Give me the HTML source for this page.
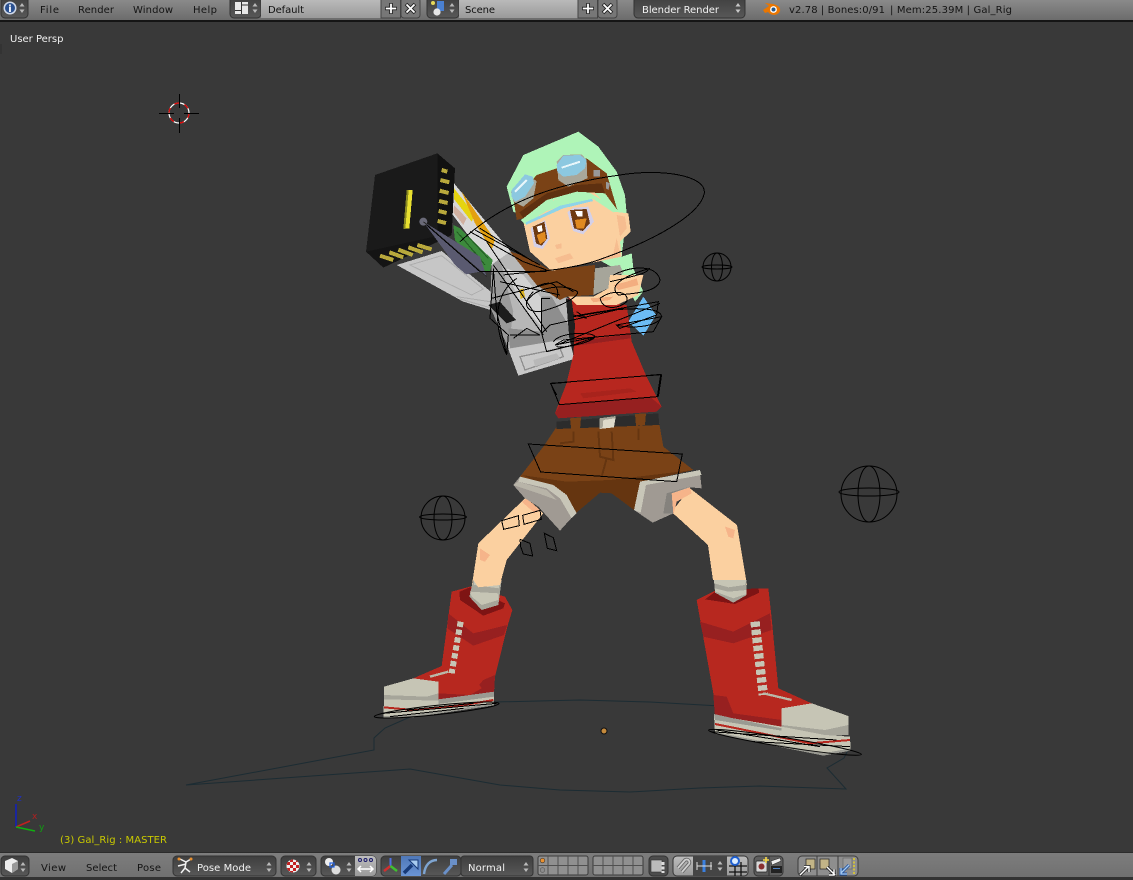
<!DOCTYPE html>
<html><head><meta charset="utf-8"><style>
html,body{margin:0;padding:0;background:#393939;overflow:hidden}
svg{display:block}
text{font-family:"DejaVu Sans","Liberation Sans",sans-serif;font-size:10px}
.m polygon,.m path{shape-rendering:crispEdges}
.w{fill:none;stroke:#000;stroke-width:3}
</style></head><body>
<svg width="1133" height="880" viewBox="0 0 1133 880" xmlns="http://www.w3.org/2000/svg">
<defs>
<linearGradient id="hd" x1="0" y1="0" x2="0" y2="1"><stop offset="0" stop-color="#8a8a8a"/><stop offset="1" stop-color="#6c6c6c"/></linearGradient>
<linearGradient id="hb" x1="0" y1="0" x2="0" y2="1"><stop offset="0" stop-color="#7d7d7d"/><stop offset="1" stop-color="#6f6f6f"/></linearGradient>
<linearGradient id="dk" x1="0" y1="0" x2="0" y2="1"><stop offset="0" stop-color="#3e3e3e"/><stop offset="1" stop-color="#585858"/></linearGradient>
<linearGradient id="lt" x1="0" y1="0" x2="0" y2="1"><stop offset="0" stop-color="#bdbdbd"/><stop offset="1" stop-color="#9a9a9a"/></linearGradient>
<linearGradient id="bl" x1="0" y1="0" x2="0" y2="1"><stop offset="0" stop-color="#4f78b8"/><stop offset="1" stop-color="#6a94d4"/></linearGradient>
<clipPath id="pv"><circle cx="293" cy="866" r="6.500"/></clipPath>
<g id="ud"><path d="M-2.5,-1.5L0,-5L2.5,-1.5Z M-2.5,1.5L0,5L2.5,1.5Z"/></g>
</defs>
<rect width="1133" height="880" fill="#393939"/>

<!-- ground outline -->
<path d="M186,785 L374,750 L374,738 L385,728 L410,717 L495,702 L580,700 L650,702 L720,706 L780,710 L800,725 L848,750 L844,758 L827,768 L846,789 L760,786 L700,788 L630,792 L560,790 L500,785 L410,769 Z" fill="none" stroke="#1c2c33" stroke-width="1"/>
<circle cx="604" cy="731" r="3" fill="#c58a3c" stroke="#111" stroke-width="1"/>

<!-- MODEL upper (zoom5 coordinates) -->
<g class="m" transform="translate(360 125) scale(.33333)">
<!-- mint hair -->
<path fill="#aff4b8" d="M440,185 L490,90 L655,20 L715,65 L770,140 L795,210 L800,265 L785,395 L815,385 L820,430 L850,500 L825,530 L780,440 L460,260Z"/>
<!-- blue sleeve -->
<path fill="#6cbcf5" d="M850,515 L888,570 L850,632 L805,590 Z"/>
<!-- gun panels -->
<path fill="#d8d8d8" d="M282,175 L465,395 L395,425 L275,265Z"/>
<path fill="#e5d410" d="M282,190 L345,270 L335,290 L282,222Z"/>
<path fill="#e3a010" d="M305,200 L405,345 L395,375 L345,295Z"/>
<path fill="#d0b0a0" d="M282,240 L320,280 L310,300 L280,262Z"/>
<path fill="#3c8a3c" d="M280,300 L300,310 L398,405 L390,440 L362,440 L285,345Z"/>
<path fill="none" stroke="#235a23" stroke-width="3" d="M290,320 L360,400 M300,330 L375,420 M320,330 L385,400"/>
<!-- gun underside -->
<path fill="#c6c6c6" d="M110,420 L245,378 L392,500 L392,555 L310,530 Z"/>
<path fill="none" stroke="#aeaeae" stroke-width="3" d="M150,420 L245,392 L370,492 L335,510 Z M290,515 L390,530 M300,522 L390,548"/>
<!-- gun body -->
<path fill="#b7b7b7" d="M395,420 L450,380 L600,510 L625,520 L640,700 L475,752 L445,670 L390,545Z"/>
<path fill="#9a9a9a" d="M395,420 L420,400 L460,560 L445,670 L390,545Z"/>
<path fill="#d2d2d2" d="M440,430 L490,450 L545,520 L550,610 L480,540Z"/>
<path fill="#8e8e8e" d="M545,515 L575,515 L625,600 L630,640 L450,670 L445,610 L545,620Z"/>
<path fill="#c8c8c8" d="M445,672 L630,640 L642,702 L475,752Z"/>
<path fill="none" stroke="#8e8e8e" stroke-width="4" d="M480,695 L600,670 L610,695 L495,735Z"/>
<path fill="#b8b8b8" d="M520,705 L590,685 L600,700 L525,725Z"/>
<path fill="#1c1c1c" d="M385,540 L420,530 L468,585 L440,595Z"/>
<path fill="#d8b020" d="M478,495 L490,490 L495,515 L482,522Z"/>
<!-- black box -->
<path fill="#1a1a1a" d="M45,150 L232,85 L232,345 L18,380Z"/>
<path fill="#111" d="M232,85 L285,130 L275,330 L232,345Z"/>
<path fill="#141414" d="M18,380 L245,330 L272,332 L70,428Z"/>
<path fill="#e8e030" d="M140,195 L158,195 L148,310 L130,312Z"/>
<path fill="#8a8a20" d="M140,195 L146,195 L136,312 L130,312Z"/>
<path fill="none" stroke="#b8a83c" stroke-width="12" d="M245,135 L262,140 M241,165 L268,172 M239,197 L266,204 M237,228 L263,234 M236,258 L260,264 M233,288 L258,294 M60,392 L100,405 M88,382 L130,397 M115,374 L158,390 M145,367 L188,382 M172,360 L215,373"/>
<!-- bone -->
<path fill="#5a5a70" d="M190,290 L360,395 L380,455 L360,440 L318,448 L285,420Z"/>
<circle cx="190" cy="290" r="12" fill="#6a6a78"/>
<path fill="none" stroke="#2c2c2c" stroke-width="3" d="M190,290 L380,455"/>
<!-- red dress -->
<path fill="#b7271f" d="M620,520 L800,540 L815,650 L885,815 L610,815 L640,690 L640,600Z"/>
<path fill="#962020" d="M650,650 L770,632 L810,628 L812,640 L650,662Z"/>
<path fill="#1f1f1f" d="M618,520 L635,525 L645,600 L640,690 L628,640Z"/>
<!-- neck strip -->
<path fill="#a6a59a" d="M705,430 L780,420 L790,445 L750,455 L745,490 L700,510Z"/>
<!-- hand -->
<path fill="#fbd0a0" d="M750,450 L850,450 L835,510 L770,540 L650,540 L625,515 L700,515 L745,490Z"/>
<path fill="#f3ae80" d="M760,480 L800,470 L830,460 L835,480 L775,495Z M690,520 L760,515 L750,525 L700,532Z"/>
<!-- brown hair -->
<path fill="#7a4216" d="M450,380 L500,395 L570,435 L705,420 L700,510 L620,515 L600,525 L530,480 Z"/>
<!-- face -->
<path fill="#fbd0a0" d="M490,290 L580,225 L700,200 L760,260 L805,265 L812,320 L780,350 L785,395 L575,438 L510,380Z"/>
<path fill="#f6bd90" d="M770,270 L795,275 L800,310 L780,335Z M770,340 L782,395 L700,412 L760,385Z M585,400 L630,385 L640,400 L595,415Z M585,360 L605,355 L605,370 L590,372Z"/>
<!-- fringe -->
<path fill="#aff4b8" d="M482,285 L560,232 L680,198 L775,255 L760,262 L700,222 L620,238 L560,258 L495,298Z"/>
<path fill="#8fd4e8" d="M497,292 L555,265 L600,242 L695,222 L700,228 L610,250 L560,272 L498,300Z"/>
<!-- goggle band -->
<path fill="#7a4216" d="M462,230 L530,150 L680,100 L740,145 L772,255 L735,205 L650,200 L560,225 L490,280 L470,285Z"/>
<path fill="#5e3010" d="M478,262 L560,205 L650,180 L725,175 L735,205 L650,200 L560,225 L490,280Z"/>
<!-- goggles -->
<path fill="#a9a79a" d="M590,110 L610,90 L665,88 L680,105 L682,160 L625,185 L595,165Z"/>
<path fill="#8cc8e0" d="M590,120 L610,92 L660,90 L680,105 L675,130 L650,150 L610,155 L592,140Z"/>
<path fill="none" stroke="#e8f6fa" stroke-width="6" d="M605,128 L660,110"/>
<path fill="#a9a79a" d="M453,200 L495,148 L530,168 L520,220 L490,245 L460,230Z"/>
<path fill="#8cc8e0" d="M455,195 L495,148 L518,155 L522,175 L495,215 L465,230 L455,215Z"/>
<path fill="none" stroke="#e8f6fa" stroke-width="6" d="M465,200 L500,165"/>
<path fill="#999" d="M700,135 L720,135 L720,155 L700,155Z M738,170 L750,175 L745,195 L738,190Z"/>
<!-- eyes -->
<path fill="#d4d0e8" d="M622,262 L640,248 L685,245 L702,290 L670,328 L640,318Z"/>
<path fill="#6e3a12" d="M630,255 L680,252 L690,295 L668,318 L642,310Z"/>
<path fill="#e08a20" d="M645,285 L680,280 L672,310 L650,310Z"/>
<path fill="#fff" d="M645,258 L668,258 L668,274 L652,274Z"/>
<path fill="#d4d0e8" d="M512,310 L555,285 L570,340 L548,372 L522,365Z"/>
<path fill="#6e3a12" d="M518,305 L553,290 L562,340 L545,362 L528,355Z"/>
<path fill="#e08a20" d="M530,330 L555,320 L558,345 L540,358Z"/>
<path fill="#fff" d="M530,305 L545,300 L548,318 L535,322Z"/>
<!-- wires -->
<g class="w" style="shape-rendering:auto">
<path d="M300,350 C420,240 560,180 780,150 C900,130 1040,150 1033,205 C1020,270 880,350 700,410 C600,440 500,440 430,450"/>
<path d="M905,748 L572,776 L590,810 M905,748 L895,815"/>
<path d="M200,300 L360,440 L560,440 M330,320 L490,410 L560,435 M360,310 L520,410 M345,315 L540,420 M380,350 L560,620 M400,420 L550,630 M395,520 L590,470 L640,500 M400,430 L410,560 L440,690 L445,630 L390,580 L400,440"/>
<path d="M760,450 C820,420 890,420 900,465 C895,500 830,505 775,510 C740,480 800,450 870,430 M500,530 C530,480 620,480 640,495 C680,500 620,540 540,560 C490,560 490,530 520,500 M720,520 C760,490 810,500 800,530 C780,550 730,560 720,520 M750,470 C820,455 880,440 860,430"/>
<path d="M570,520 L545,520 L545,625 L560,680 L640,660 L710,635 L585,660 L610,645 L880,620 L905,575 L770,600 L780,610 L890,570 L895,530 L640,575 L790,550 L660,580 L570,600 L545,625"/>
<path d="M520,490 C590,450 600,500 590,520 M470,460 C400,510 400,600 440,690 M420,470 L600,510"/>
<path d="M580,650 C600,620 700,620 705,635 C700,650 620,670 590,665 M640,575 C700,560 900,530 905,575 C890,610 800,610 770,600 M590,660 L900,535 M450,630 L540,630 L500,610 L460,640 M640,570 L680,580 L650,560"/>
</g>
</g>

<!-- MODEL middle (zoom6 coordinates) -->
<g class="m" transform="translate(410 370) scale(.33333)">
<!-- left leg -->
<path fill="#fbd0a0" d="M345,385 L400,430 L290,570 L268,650 L185,650 L205,520Z"/>
<path fill="#f6b48a" d="M335,395 L350,385 L390,420 L375,430Z M210,535 L240,555 L225,575 L210,570Z"/>
<!-- right leg -->
<path fill="#fbd0a0" d="M785,426 L840,355 L981,465 L1011,645 L909,630 L894,525Z"/>
<path fill="#f6b48a" d="M785,370 L840,352 L845,370 L800,395 L790,435Z M945,470 L975,480 L970,505 L955,500Z"/>
<!-- dress lower -->
<path fill="#b7271f" d="M485,0 L700,0 L755,110 L740,125 L445,145 L435,130Z"/>
<path fill="#962020" d="M450,103 L720,80 L755,110 L740,125 L445,145 L435,130Z"/>
<path fill="#a8231c" d="M510,70 L660,55 L680,65 L520,85Z"/>
<!-- shorts -->
<path fill="#7a4216" d="M440,170 L745,145 L760,230 L850,300 L700,335 L672,420 L605,370 L570,368 L497,430 L465,370 L330,320 L400,230Z"/>
<path fill="#653510" d="M335,315 L470,335 L600,330 L850,300 L700,335 L672,420 L605,370 L570,368 L497,430 L465,370Z"/>
<path fill="none" stroke="#653510" stroke-width="6" d="M565,185 L570,260 L610,270 L605,185 M590,265 L575,320 M490,185 L490,215 L450,220 M685,175 L685,210"/>
<!-- belt -->
<path fill="#2c2c2c" d="M440,155 L745,130 L748,165 L440,177Z"/>
<path fill="#7a4216" d="M480,145 L513,142 L510,180 L484,180Z M675,132 L708,130 L705,165 L678,168Z"/>
<path fill="#dedacb" d="M568,145 L617,140 L612,172 L568,177Z"/>
<path fill="#a9a699" d="M568,145 L617,138 L615,145 L580,150 L578,172 L568,177Z"/>
<!-- left cuff -->
<path fill="#a09a93" d="M310,345 L330,320 L465,370 L497,430 L450,482 L385,410 L345,385Z"/>
<path fill="#c8c6b8" d="M330,320 L430,345 L470,375 L500,430 L485,445 L450,385 L410,355 L325,335Z"/>
<path fill="#b8b4a8" d="M310,345 L325,335 L410,360 L440,390 L385,370Z"/>
<!-- right cuff -->
<path fill="#a09a93" d="M690,335 L870,310 L875,355 L840,352 L785,370 L790,430 L728,458 L672,420Z"/>
<path fill="#c8c6b8" d="M690,335 L870,300 L875,315 L708,345 L692,428 L672,420Z"/>
<path fill="#85827d" d="M770,370 L840,350 L785,370 L790,430 L760,430Z"/>
<!-- wires -->
<g class="w" style="shape-rendering:auto">
<path d="M422,40 L752,14 L742,80 L448,104Z"/>
<path d="M355,222 L817,252 L800,335 L392,306Z"/>
<path d="M275,452 L325,437 L328,467 L281,478Z"/>
<path d="M338,436 L390,421 L394,448 L342,463Z"/>
<path d="M330,508 L360,520 L368,558 L340,552 L332,530 L330,508"/>
<path d="M403,490 L430,503 L440,542 L412,535Z"/>
</g>
</g>

<!-- MODEL boots (zoom7 coordinates) -->
<g class="m" transform="translate(370 580) scale(.33333)">
<!-- left boot -->
<path fill="#b7281f" d="M245,35 L300,20 L405,50 L427,90 L412,140 L375,290 L372,340 L205,360 L130,295 L215,258Z"/>
<path fill="#7e1414" d="M268,35 L300,22 L405,70 L400,85 L340,107 L270,60Z"/>
<path fill="#972020" d="M235,100 L310,160 L412,135 L402,165 L310,197 L232,145Z"/>
<path fill="#972020" d="M205,340 L300,345 L340,300 L375,285 L372,338 L205,360Z"/>
<path fill="#b7281f" d="M215,330 L300,335 L325,310 L335,325 L300,345 L215,340Z"/>
<path fill="#a6a59a" d="M310,0 L395,0 L385,75 L335,90 L298,50Z"/>
<path fill="#c6c5b5" d="M312,0 L392,0 L386,25 L312,15Z M300,35 L385,40 L385,60 L335,75 L305,50Z"/>
<path fill="#fbd0a0" d="M310,0 L395,0 L390,15 L325,22Z" />
<path fill="none" stroke="#c6c5b5" stroke-width="18" stroke-dasharray="16 8" d="M272,125 L245,280"/>
<path fill="none" stroke="#b9b8a8" stroke-width="7" d="M180,290 L235,275"/>
<path fill="#c6c5b5" d="M42,320 L130,295 L205,305 L205,360 L42,350 Z"/>
<path fill="#a6a59a" d="M42,345 L170,350 L205,340 L205,362 L42,358Z"/>
<path fill="#c6c5b5" d="M42,358 L205,362 L372,338 L372,375 L130,410 L40,415Z"/>
<path fill="#9a9a92" d="M205,358 L372,335 L372,350 L205,372Z"/>
<path fill="none" stroke="#b7281f" stroke-width="6" d="M42,382 L130,390 L300,372 L370,360"/>
<path fill="#9a9a92" d="M40,408 L130,405 L372,370 L372,376 L130,412 L40,416Z"/>
<!-- right boot -->
<path fill="#b7281f" d="M980,60 L1040,30 L1195,25 L1205,115 L1225,325 L1325,370 L1235,385 L1235,445 L1035,410 L1030,340Z"/>
<path fill="#7e1414" d="M1005,58 L1040,32 L1165,25 L1168,38 L1095,72Z"/>
<path fill="#972020" d="M990,125 L1090,155 L1200,100 L1205,150 L1090,190 L1000,170Z"/>
<path fill="#a6a59a" d="M1032,0 L1130,0 L1130,45 L1090,68 L1035,38Z"/>
<path fill="#c6c5b5" d="M1032,0 L1130,0 L1125,15 L1075,22 L1032,10Z M1035,25 L1075,35 L1130,30 L1130,42 L1090,55 L1036,35Z"/>
<path fill="none" stroke="#c6c5b5" stroke-width="28" stroke-dasharray="16 8" d="M1155,125 L1180,345"/>
<path fill="none" stroke="#b9b8a8" stroke-width="7" d="M1180,340 L1265,360"/>
<path fill="#972020" d="M1030,345 L1070,350 L1090,400 L1235,420 L1235,445 L1035,410Z"/>
<path fill="#c6c5b5" d="M1235,385 L1325,370 L1435,408 L1435,460 L1365,465 L1235,440Z"/>
<path fill="#a6a59a" d="M1235,435 L1365,450 L1435,435 L1435,465 L1360,468 L1235,445Z"/>
<path fill="#c6c5b5" d="M1032,405 L1235,440 L1365,465 L1440,470 L1442,510 L1360,525 L1035,460Z"/>
<path fill="#9a9a92" d="M1032,402 L1090,415 L1235,445 L1235,452 L1035,420Z"/>
<path fill="none" stroke="#b7281f" stroke-width="6" d="M1035,432 L1100,445 L1320,490 L1440,480"/>
<path fill="#9a9a92" d="M1035,456 L1360,520 L1442,505 L1442,512 L1360,527 L1035,462Z"/>
<!-- feet wires -->
<g class="w" style="shape-rendering:auto">
<ellipse cx="200" cy="390" rx="188" ry="14" transform="rotate(-6 200 390)"/>
<path d="M40,400 L380,370 M110,390 L310,370 M60,410 L280,385"/>
<ellipse cx="1245" cy="487" rx="232" ry="14" transform="rotate(9 1245 487)"/>
<path d="M1020,455 L1400,480 M1040,450 L1350,500 M1150,485 L1440,500"/>
</g>
</g>

<!-- bone spheres -->
<g fill="none" stroke="#000" stroke-width="1">
<circle cx="443" cy="518" r="22"/><ellipse cx="443" cy="518" rx="9" ry="22"/><ellipse cx="443" cy="517" rx="23.5" ry="3"/>
<circle cx="869" cy="494" r="28"/><ellipse cx="869" cy="494" rx="11" ry="28"/><ellipse cx="869" cy="492" rx="30" ry="4"/>
<circle cx="717" cy="267" r="14"/><ellipse cx="717" cy="267" rx="5.5" ry="14"/><ellipse cx="717" cy="267" rx="15" ry="2"/>
</g>

<!-- 3D cursor -->
<circle cx="179" cy="113" r="10" fill="none" stroke="#fff" stroke-width="1.2"/>
<circle cx="179" cy="113" r="10" fill="none" stroke="#e00000" stroke-width="1.3" stroke-dasharray="5 5.5"/>
<path d="M159,113.5H174M184,113.5H199M179.5,94V108M179.5,118V133" stroke="#000" stroke-width="1"/>

<!-- text overlays -->
<text x="10" y="42" fill="#f0f0f0">User Persp</text>
<text x="60" y="843" fill="#c9c900" textLength="107">(3) Gal_Rig : MASTER</text>
<path d="M0,44h2v10h-2z" fill="#333"/>

<!-- axis gizmo -->
<path d="M16,827V804" stroke="#1020c0" stroke-width="1.5"/>
<path d="M16,827L30,821" stroke="#c02020" stroke-width="1.5"/>
<path d="M16,827L35,831" stroke="#10b010" stroke-width="1.5"/>
<text x="17" y="801" fill="#2030c0" style="font-size:9px">z</text>
<text x="32" y="819" fill="#b02020" style="font-size:9px">x</text>
<text x="39" y="830" fill="#10a010" style="font-size:9px">y</text>

<!-- TOP HEADER -->
<rect width="1133" height="20" fill="url(#hd)"/>
<rect y="20" width="1133" height="2" fill="#151515"/>
<rect x="1" y="-4" width="27" height="22" rx="4" fill="url(#dk)" stroke="#333"/>
<circle cx="10" cy="8" r="6.5" fill="#cfd8e8"/><circle cx="10" cy="8" r="5" fill="#2a5090"/>
<text x="8.2" y="12" fill="#fff" style="font-size:10px;font-weight:bold">i</text>
<use href="#ud" x="22" y="8" fill="#b8b8b8"/>
<g fill="#141414">
<text x="40" y="13" textLength="19">File</text>
<text x="78" y="13" textLength="36">Render</text>
<text x="133" y="13" textLength="40">Window</text>
<text x="193" y="13" textLength="24">Help</text>
</g>
<!-- layout selector -->
<rect x="230" y="-4" width="31" height="22" rx="4" fill="url(#dk)" stroke="#333"/>
<rect x="235" y="2" width="13" height="12" fill="#e8e8e8"/><path d="M241.5,2V14M235,10.5H241M242,5H248" stroke="#333" stroke-width="1"/>
<use href="#ud" x="255" y="8" fill="#b8b8b8"/>
<rect x="261" y="-2" width="120" height="20" fill="url(#lt)"/>
<text x="268" y="13" fill="#111" textLength="36">Default</text>
<rect x="381" y="-2" width="19.5" height="20" fill="#777" stroke="#444"/>
<rect x="401" y="-2" width="19" height="20" rx="3" fill="#777" stroke="#444"/>
<path d="M391,3V14M385,8.500H397" stroke="#222" stroke-width="3.600"/><path d="M391,3.800V13.200M385.800,8.500H396.200" stroke="#fff" stroke-width="1.800"/>
<path d="M406,4L415,13M415,4L406,13" stroke="#222" stroke-width="3.600"/><path d="M406.500,4.500L414.500,12.500M414.500,4.500L406.500,12.500" stroke="#fff" stroke-width="1.800"/>
<!-- scene -->
<rect x="427" y="-4" width="32" height="22" rx="4" fill="url(#dk)" stroke="#333"/>
<rect x="437" y="1" width="7" height="10" fill="#4a80d0"/><circle cx="433" cy="3" r="2" fill="#e6d85a"/><circle cx="437" cy="12" r="3.6" fill="#e6e6e6"/>
<use href="#ud" x="452" y="8" fill="#b8b8b8"/>
<rect x="459" y="-2" width="119" height="20" fill="url(#lt)"/>
<text x="465" y="13" fill="#111" textLength="30">Scene</text>
<rect x="578" y="-2" width="19.5" height="20" fill="#777" stroke="#444"/>
<rect x="598" y="-2" width="19" height="20" rx="3" fill="#777" stroke="#444"/>
<path d="M588,3V14M582,8.500H594" stroke="#222" stroke-width="3.600"/><path d="M588,3.800V13.200M582.800,8.500H593.200" stroke="#fff" stroke-width="1.800"/>
<path d="M603,4L612,13M612,4L603,13" stroke="#222" stroke-width="3.600"/><path d="M603.500,4.500L611.500,12.500M611.500,4.500L603.500,12.500" stroke="#fff" stroke-width="1.800"/>
<!-- engine -->
<rect x="634" y="-4" width="111" height="22" rx="4" fill="url(#dk)" stroke="#333"/>
<text x="642" y="13" fill="#f2f2f2" textLength="77">Blender Render</text>
<use href="#ud" x="738" y="8" fill="#c8c8c8"/>
<!-- logo -->
<path d="M763,10L769,6L765,3L773,4C778,5 781,8 780,11C778,16 771,16 768,12L765,13Z" fill="#ea7600"/>
<circle cx="773.500" cy="9.500" r="3.400" fill="#fff"/><circle cx="773.500" cy="9.500" r="2" fill="#265787"/>
<text x="789" y="13" fill="#141414" textLength="96">v2.78 | Bones:0/91</text>
<text x="890" y="13" fill="#141414" textLength="122">| Mem:25.39M | Gal_Rig</text>

<!-- BOTTOM HEADER -->
<rect y="852" width="1133" height="1" fill="#2c2c2c"/>
<rect y="853" width="1133" height="27" fill="url(#hb)"/>
<rect y="877" width="1133" height="3" fill="#333"/>
<rect x="1" y="856" width="28" height="20" rx="4" fill="url(#dk)" stroke="#333"/>
<path d="M5,861L12,858L18,861V869L12,873L5,869Z" fill="#eee"/><path d="M12,864L18,861V869L12,873Z" fill="#999"/>
<use href="#ud" x="23" y="867" fill="#b8b8b8"/>
<g fill="#141414">
<text x="41" y="871" textLength="25">View</text>
<text x="86" y="871" textLength="31">Select</text>
<text x="137" y="871" textLength="24">Pose</text>
</g>
<rect x="173" y="856" width="103" height="20" rx="4" fill="url(#dk)" stroke="#333"/>
<path d="M180,859L186,862L191,859M186,862L185,868L181,873M185,868L190,872M186,864L178,866" fill="none" stroke="#f2f2f2" stroke-width="1.500"/>
<circle cx="179" cy="859" r="1.500" fill="#e89030"/><circle cx="191" cy="859" r="1.500" fill="#e89030"/>
<text x="197" y="871" fill="#f2f2f2" textLength="54">Pose Mode</text>
<use href="#ud" x="269" y="867" fill="#bbb"/>
<rect x="281" y="856" width="35" height="20" rx="4" fill="url(#dk)" stroke="#333"/>
<circle cx="293" cy="866" r="6.500" fill="#eee"/>
<g clip-path="url(#pv)" fill="#c42020"><rect x="290" y="859" width="3" height="3"/><rect x="296" y="859" width="3" height="3"/><rect x="287" y="862" width="3" height="3"/><rect x="293" y="862" width="3" height="3"/><rect x="290" y="865" width="3" height="3"/><rect x="296" y="865" width="3" height="3"/><rect x="287" y="868" width="3" height="3"/><rect x="293" y="868" width="3" height="3"/><rect x="290" y="871" width="3" height="3"/></g>
<use href="#ud" x="309" y="867" fill="#bbb"/>
<rect x="321" y="856" width="55" height="20" rx="4" fill="url(#dk)" stroke="#333"/>
<path d="M355,856h17a4,4 0 0 1 4,4v12a4,4 0 0 1-4,4h-17z" fill="url(#lt)"/>
<circle cx="329" cy="862" r="4" fill="#eee"/><circle cx="336" cy="870" r="4.500" fill="#ddd"/><rect x="330" y="863" width="4" height="4" fill="none" stroke="#2060e0" stroke-width="1.200"/>
<use href="#ud" x="349" y="867" fill="#bbb"/>
<circle cx="360" cy="860" r="1.500" fill="none" stroke="#1a1a6a"/><circle cx="365.500" cy="860" r="1.500" fill="none" stroke="#1a1a6a"/><circle cx="371" cy="860" r="1.500" fill="none" stroke="#1a1a6a"/>
<path d="M358,869H373M361,866L358,869L361,872M370,866L373,869L370,872" fill="none" stroke="#fff" stroke-width="1.500"/>
<rect x="381" y="856" width="80" height="20" rx="4" fill="url(#dk)" stroke="#333"/>
<rect x="401" y="856" width="20" height="20" fill="url(#bl)"/>
<path d="M390.500,866V858" stroke="#5070e0" stroke-width="2"/><path d="M390.500,866L384,871" stroke="#d03030" stroke-width="2.400"/><path d="M390.500,866L397,871" stroke="#40c030" stroke-width="2.400"/>
<path d="M404,873L412,865" stroke="#173a78" stroke-width="3.500"/><path d="M409,860H418V869Z" fill="#a8ccf0" stroke="#173a78"/>
<path d="M424,874C425,865 430,860 437,860" fill="none" stroke="#7ea4d0" stroke-width="2.400"/>
<path d="M444,874L452,865" stroke="#6a90c8" stroke-width="3"/><rect x="450" y="859" width="7" height="6" fill="#6a90c8"/>
<rect x="461" y="856" width="72" height="20" rx="3" fill="url(#dk)" stroke="#333"/>
<text x="468" y="871" fill="#f2f2f2" textLength="37">Normal</text>
<use href="#ud" x="526" y="867" fill="#bbb"/>
<!-- layers -->
<g>
<rect x="538" y="856" width="50" height="19" rx="2" fill="#909090" stroke="#3a3a3a"/>
<path d="M548,856V875M558,856V875M568,856V875M578,856V875M538,865.500H588" stroke="#505050" stroke-width="1"/>
<circle cx="542.500" cy="860.500" r="2.300" fill="#e89030" stroke="#333" stroke-width=".6"/><circle cx="542.500" cy="870" r="2.300" fill="#8c8c8c" stroke="#555" stroke-width=".6"/>
<rect x="593" y="856" width="50" height="19" rx="2" fill="#909090" stroke="#3a3a3a"/>
<path d="M603,856V875M613,856V875M623,856V875M633,856V875M593,865.500H643" stroke="#505050" stroke-width="1"/>
</g>
<rect x="649" y="856" width="19" height="20" rx="4" fill="#4c4c4c" stroke="#333"/>
<rect x="651" y="860" width="11" height="12" fill="#bbb" stroke="#333" stroke-width=".6"/><path d="M663,862V873" stroke="#ddd" stroke-width="3" stroke-dasharray="3 1.500"/>
<rect x="673" y="856" width="75" height="20" rx="4" fill="url(#lt)" stroke="#333"/>
<rect x="693" y="856" width="34" height="20" fill="#454545"/>
<path d="M678,868L685,860C689,858 691,863 688,865L682,872" fill="none" stroke="#666" stroke-width="3.600"/>
<path d="M678,868L685,860C689,858 691,863 688,865L682,872" fill="none" stroke="#d0d0d0" stroke-width="1.800"/>
<path d="M704,860V872" stroke="#3a80e0" stroke-width="3"/><path d="M697,866H712M697,862V870M711,862V870" stroke="#dfdfdf" stroke-width="1"/>
<use href="#ud" x="720" y="866" fill="#bbb"/>
<path d="M729,866H747M729,872H747M735,862V876M741,862V876" stroke="#111" stroke-width="1.300"/><circle cx="735" cy="861" r="4" fill="#ddeeff" stroke="#2060d0" stroke-width="2"/>
<rect x="754" y="856" width="29" height="20" rx="4" fill="#5e5e5e" stroke="#333"/>
<path d="M769,856V876" stroke="#333"/>
<rect x="756" y="861" width="11" height="11" rx="1" fill="#d8d8d8" stroke="#222" stroke-width=".7"/><circle cx="761.500" cy="866.500" r="3" fill="#8a3030"/><path d="M766,857V863M763,860H769" stroke="#f5d84a" stroke-width="1.600"/>
<rect x="771" y="866" width="11" height="7" fill="#222"/><path d="M771,861L780,858L781,861L772,865Z" fill="#eee" stroke="#222" stroke-width=".5"/><rect x="773" y="868" width="7" height="1" fill="#5080c0"/>
<rect x="798" y="856" width="60" height="20" rx="4" fill="#8e8e8e" stroke="#3c3c3c"/>
<path d="M817,856V876M838,856V876" stroke="#3c3c3c"/>
<rect x="806" y="859" width="9" height="10" fill="#c2b487" stroke="#222" stroke-width=".7"/>
<path d="M800,875L808,867M804,866.500H809V872" fill="none" stroke="#111" stroke-width="3"/><path d="M800,875L808,867M804,866.500H809V872" fill="none" stroke="#fff" stroke-width="1.500"/>
<rect x="820" y="859" width="9" height="10" fill="#c2b487" stroke="#222" stroke-width=".7"/>
<path d="M827,867L835,875M834,869.500V875H829" fill="none" stroke="#111" stroke-width="3"/><path d="M827,867L835,875M834,869.500V875H829" fill="none" stroke="#fff" stroke-width="1.500"/>
<rect x="843" y="858" width="9" height="11" fill="#9a9a9a" stroke="#666" stroke-width=".7"/>
<path d="M854,858V875" stroke="#e6d020" stroke-width="1.500" stroke-dasharray="2 1.500"/>
<path d="M849,865L841,873M841,868V874H847" fill="none" stroke="#1c4fa0" stroke-width="3"/><path d="M849,865L841,873M841,868V874H847" fill="none" stroke="#a8ccf0" stroke-width="1.300"/>
</svg>
</body></html>
